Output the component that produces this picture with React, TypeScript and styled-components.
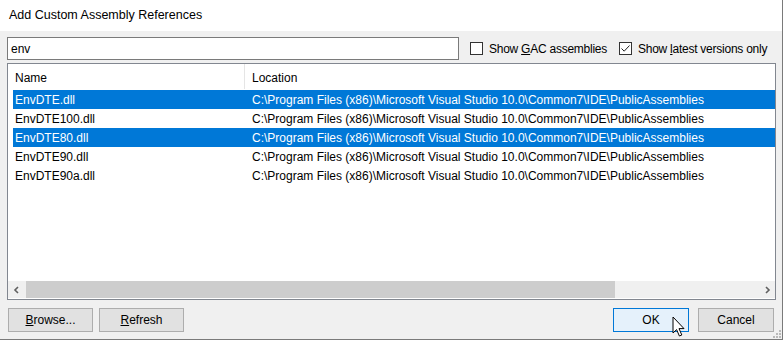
import React from "react";
import styled, { createGlobalStyle } from "styled-components";

const GlobalStyle = createGlobalStyle`
  html, body {
    margin: 0;
    padding: 0;
    background: #f0f0f0;
  }
  body {
    font-family: "Liberation Sans", Arial, sans-serif;
    font-size: 12px;
    color: #000;
  }
`;

interface Assembly {
  name: string;
  location: string;
  selected: boolean;
}

const LOCATION =
  "C:\\Program Files (x86)\\Microsoft Visual Studio 10.0\\Common7\\IDE\\PublicAssemblies";

const assemblies: Assembly[] = [
  { name: "EnvDTE.dll", location: LOCATION, selected: true },
  { name: "EnvDTE100.dll", location: LOCATION, selected: false },
  { name: "EnvDTE80.dll", location: LOCATION, selected: true },
  { name: "EnvDTE90.dll", location: LOCATION, selected: false },
  { name: "EnvDTE90a.dll", location: LOCATION, selected: false },
];

const Checkbox = ({ checked }: { checked: boolean }) => (
  <CheckBox>
    {checked && (
      <svg width="11" height="11" viewBox="0 0 11 11">
        <path d="M1.5 5.5 L4.2 8.2 L9.5 2.5" fill="none" stroke="#222" strokeWidth="1" />
      </svg>
    )}
  </CheckBox>
);

const App = () => {
  return (
    <>
      <GlobalStyle />
      <Window>
        <TitleBar>Add Custom Assembly References</TitleBar>
        <Body>
          <SearchRow>
            <SearchInput defaultValue="env" />
            <CheckLabel>
              <Checkbox checked={false} />
              <span>
                Show <u>G</u>AC assemblies
              </span>
            </CheckLabel>
            <CheckLabel>
              <Checkbox checked={true} />
              <span>
                Show <u>l</u>atest versions only
              </span>
            </CheckLabel>
          </SearchRow>

          <ListView>
            <HeaderRow>
              <HeaderCell width={237}>Name</HeaderCell>
              <HeaderCell>Location</HeaderCell>
            </HeaderRow>
            <Rows>
              {assemblies.map((a) => (
                <Row key={a.name} selected={a.selected}>
                  <NameCell>{a.name}</NameCell>
                  <Cell>{a.location}</Cell>
                </Row>
              ))}
            </Rows>
            <ScrollBar>
              <ScrollArrow>
                <svg width="8" height="8" viewBox="0 0 8 8">
                  <path d="M5 1 L2 4 L5 7" fill="none" stroke="#606060" strokeWidth="1.6" />
                </svg>
              </ScrollArrow>
              <ScrollTrack>
                <ScrollThumb />
              </ScrollTrack>
              <ScrollArrow>
                <svg width="8" height="8" viewBox="0 0 8 8">
                  <path d="M3 1 L6 4 L3 7" fill="none" stroke="#606060" strokeWidth="1.6" />
                </svg>
              </ScrollArrow>
            </ScrollBar>
          </ListView>

          <ButtonRow>
            <Button wide>
              <u>B</u>rowse...
            </Button>
            <Button wide>
              <u>R</u>efresh
            </Button>
            <Spacer />
            <Button primary>
              OK
              <Cursor width="14" height="22" viewBox="0 0 14 22">
                <path
                  d="M1 1 L1 17 L4.6 13.6 L7.4 20 L9.8 19 L7 12.6 L12 12.6 Z"
                  fill="#fff"
                  stroke="#000"
                  strokeWidth="1"
                  strokeLinejoin="miter"
                />
              </Cursor>
            </Button>
            <Button gap>Cancel</Button>
          </ButtonRow>
          <Grip width="9" height="9" viewBox="0 0 9 9">
            <rect x="7" y="1" width="2" height="2" fill="#b9b9b9" />
            <rect x="4" y="4" width="2" height="2" fill="#b9b9b9" />
            <rect x="7" y="4" width="2" height="2" fill="#b9b9b9" />
            <rect x="1" y="7" width="2" height="2" fill="#b9b9b9" />
            <rect x="4" y="7" width="2" height="2" fill="#b9b9b9" />
            <rect x="7" y="7" width="2" height="2" fill="#b9b9b9" />
          </Grip>
        </Body>
      </Window>
    </>
  );
};

export default App;

const Window = styled.div`
  width: 783px;
  height: 340px;
  box-sizing: border-box;
  display: flex;
  flex-direction: column;
  border-right: 1px solid #7a7a7a;
  border-bottom: 1px solid #7a7a7a;
  background: #f0f0f0;
`;

const TitleBar = styled.div`
  height: 31px;
  background: #fff;
  display: flex;
  align-items: center;
  padding-left: 9px;
  padding-bottom: 1px;
  box-sizing: border-box;
  font-size: 12.5px;
`;

const Body = styled.div`
  position: relative;
  flex: 1;
  display: flex;
  flex-direction: column;
  padding: 6px 6px 0 7px;
  border-left: 1px solid #7a7a7a;
  margin-left: -1px;
`;

const SearchRow = styled.div`
  display: flex;
  align-items: center;
  height: 23px;
`;

const SearchInput = styled.input`
  width: 452px;
  flex-shrink: 0;
  height: 23px;
  box-sizing: border-box;
  border: 1px solid #7a7a7a;
  padding: 0 3px;
  font-family: "Liberation Sans", Arial, sans-serif;
  font-size: 12px;
  color: #000;
  outline: none;
  margin-right: 11px;
`;

const CheckLabel = styled.label`
  display: flex;
  align-items: center;
  flex-shrink: 0;
  gap: 6px;
  margin-right: 12px;
  white-space: nowrap;
  letter-spacing: -0.25px;
`;

const CheckBox = styled.span`
  width: 13px;
  height: 13px;
  box-sizing: border-box;
  border: 1px solid #333;
  background: #fff;
  display: flex;
  align-items: center;
  justify-content: center;
`;

const ListView = styled.div`
  margin-top: 3px;
  height: 237px;
  box-sizing: border-box;
  border: 1px solid #828790;
  background: #fff;
  display: flex;
  flex-direction: column;
`;

const HeaderRow = styled.div`
  display: flex;
  height: 26px;
  flex-shrink: 0;
`;

const HeaderCell = styled.div<{ width?: number }>`
  ${(p) => (p.width ? `width: ${p.width}px;` : "flex: 1;")}
  box-sizing: border-box;
  display: flex;
  align-items: center;
  padding-left: 7px;
  padding-top: 2px;
  border-right: ${(p) => (p.width ? "1px solid #e5e5e5" : "none")};
  height: 25px;
`;

const Rows = styled.div`
  flex: 1;
  padding-left: 5px;
`;

const Row = styled.div<{ selected: boolean }>`
  display: flex;
  height: 19px;
  align-items: center;
  background: ${(p) => (p.selected ? "#0078d7" : "transparent")};
  color: ${(p) => (p.selected ? "#fff" : "#000")};
  white-space: nowrap;
`;

const NameCell = styled.div`
  width: 239px;
  box-sizing: border-box;
  padding-left: 2px;
  flex-shrink: 0;
`;

const Cell = styled.div`
  padding-left: 0;
`;

const ScrollBar = styled.div`
  height: 17px;
  display: flex;
  background: #f0f0f0;
  margin-bottom: 1px;
`;

const ScrollArrow = styled.div`
  width: 17px;
  display: flex;
  align-items: center;
  justify-content: center;
`;

const ScrollTrack = styled.div`
  flex: 1;
  display: flex;
  padding: 0 1px;
`;

const ScrollThumb = styled.div`
  width: 589px;
  background: #cdcdcd;
`;

const ButtonRow = styled.div`
  display: flex;
  gap: 6px;
  margin-top: 8px;
  padding: 0 2px 0 1px;
`;

const Spacer = styled.div`
  flex: 1;
`;

const Button = styled.button<{ primary?: boolean; gap?: boolean; wide?: boolean }>`
  position: relative;
  width: ${(p) => (p.wide ? "85px" : "76px")};
  height: 24px;
  box-sizing: border-box;
  font-family: "Liberation Sans", Arial, sans-serif;
  font-size: 12px;
  color: #000;
  background: ${(p) => (p.primary ? "#e5f1fb" : "#e1e1e1")};
  border: 1px solid ${(p) => (p.primary ? "#0078d7" : "#adadad")};
  padding: 0;
  margin-left: ${(p) => (p.gap ? "3px" : "0")};
`;

const Cursor = styled.svg`
  position: absolute;
  left: 58px;
  top: 7px;
`;

const Grip = styled.svg`
  position: absolute;
  right: 1px;
  bottom: 1px;
`;
